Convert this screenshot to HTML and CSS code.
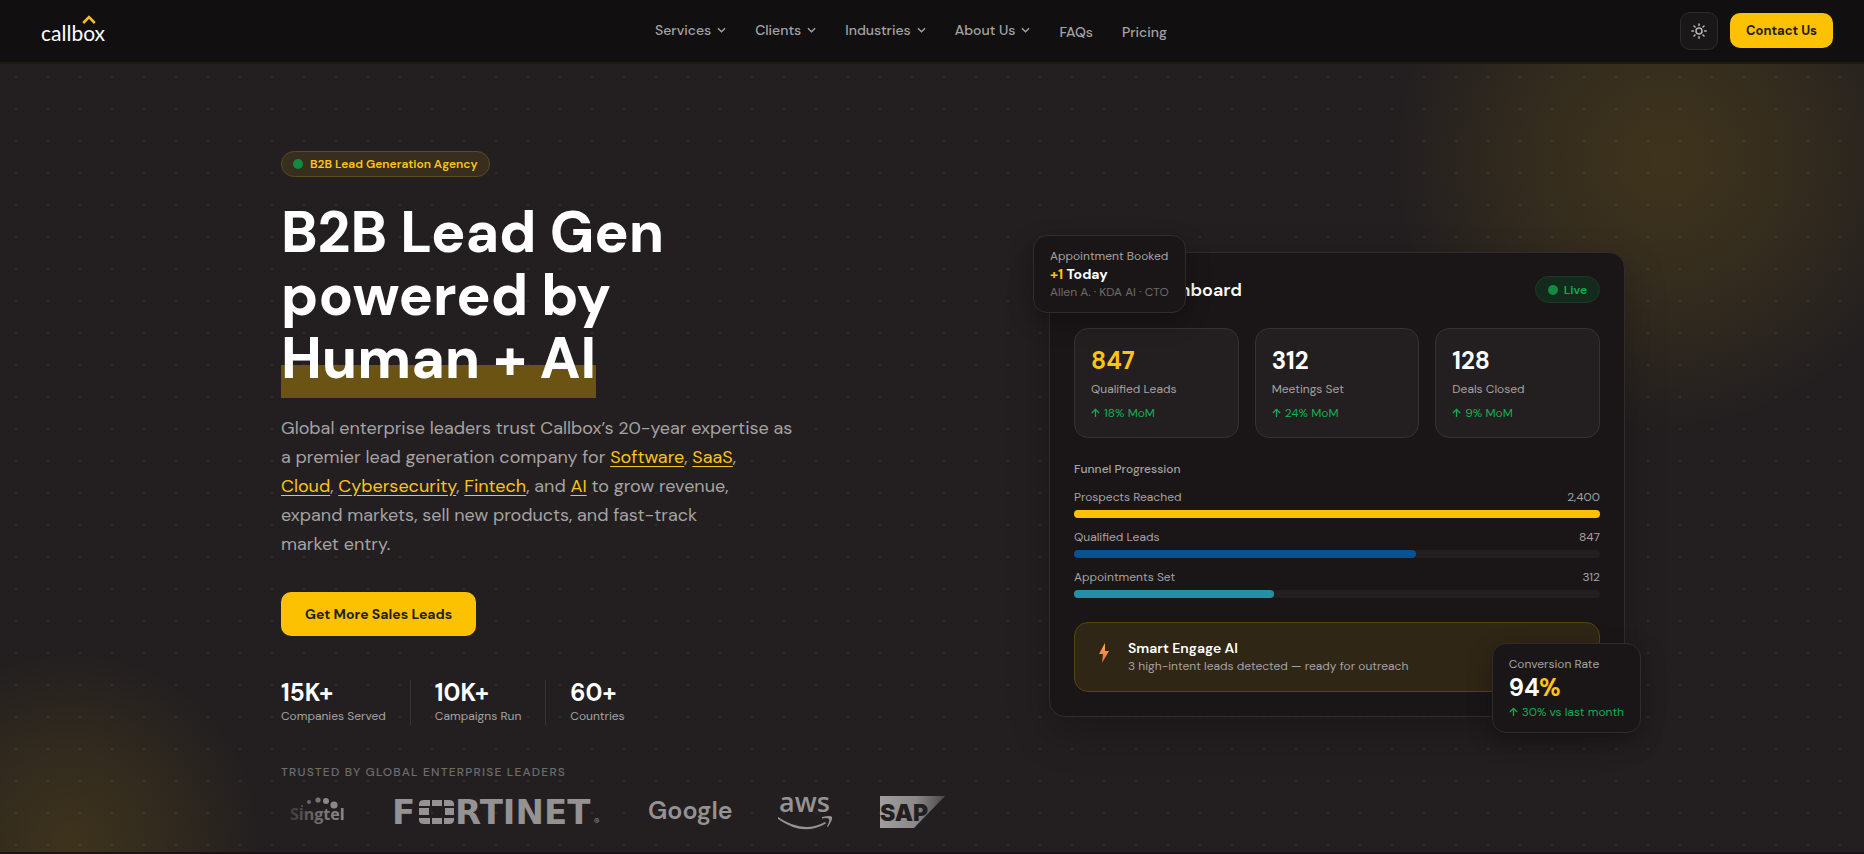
FILE: index.html
```html
<!DOCTYPE html>
<html lang="en">
<head>
<meta charset="utf-8">
<title>Callbox – B2B Lead Generation Agency</title>
<meta name="viewport" content="width=device-width, initial-scale=1">
<link rel="stylesheet" href="styles.css">
</head>
<body>
<header class="nav">
  <a class="brand" href="#" aria-label="callbox home">callbox
    <svg class="brand-roof" viewBox="0 0 14 9" width="14" height="9" aria-hidden="true"><path d="M1.200 8 7 2.200 12.800 8" fill="none" stroke="#f5bd1f" stroke-width="2.600"/></svg>
  </a>
  <nav class="menu" aria-label="Main">
    <button class="menu-item has-sub" type="button">Services <svg class="chev" viewBox="0 0 10 6"><path d="m1 1 4 4 4-4"/></svg></button>
    <button class="menu-item has-sub" type="button">Clients <svg class="chev" viewBox="0 0 10 6"><path d="m1 1 4 4 4-4"/></svg></button>
    <button class="menu-item has-sub" type="button">Industries <svg class="chev" viewBox="0 0 10 6"><path d="m1 1 4 4 4-4"/></svg></button>
    <button class="menu-item has-sub" type="button">About Us <svg class="chev" viewBox="0 0 10 6"><path d="m1 1 4 4 4-4"/></svg></button>
    <a class="menu-item" href="#">FAQs</a>
    <a class="menu-item" href="#">Pricing</a>
  </nav>
  <div class="nav-actions">
    <button class="theme" type="button" aria-label="Toggle theme">
      <svg viewBox="0 0 24 24" width="18" height="18"><circle cx="12" cy="12" r="4"/><path d="M12 2.500v2M12 19.500v2M2.500 12h2M19.500 12h2M5.300 5.300l1.400 1.400M17.300 17.300l1.400 1.400M5.300 18.700l1.400-1.400M17.300 6.700l1.400-1.400"/></svg>
    </button>
    <a class="btn btn-small" href="#">Contact Us</a>
  </div>
</header>

<main class="hero">
  <div class="hero-inner">
    <section class="pitch">
      <p class="badge"><span class="dot"></span>B2B Lead Generation Agency</p>
      <h1 class="title">B2B Lead Gen<br>powered by<br><span class="mark">Human + AI</span></h1>
      <p class="lead">Global enterprise leaders trust Callbox’s 20-year expertise as<br>a premier lead generation company for <a href="#">Software</a>, <a href="#">SaaS</a>,<br><a href="#">Cloud</a>, <a href="#">Cybersecurity</a>, <a href="#">Fintech</a>, and <a href="#">AI</a> to grow revenue,<br>expand markets, sell new products, and fast-track<br>market entry.</p>
      <a class="btn btn-large" href="#">Get More Sales Leads</a>
      <ul class="stats">
        <li><strong>15K+</strong><span>Companies Served</span></li>
        <li><strong>10K+</strong><span>Campaigns Run</span></li>
        <li><strong>60+</strong><span>Countries</span></li>
      </ul>
      <p class="trusted">TRUSTED BY GLOBAL ENTERPRISE LEADERS</p>
      <div class="logos">
        <svg class="logo" width="56" height="34" viewBox="0 0 56 34" role="img" aria-label="Singtel">
          <defs><linearGradient id="fadeSing" x1="0" x2="1"><stop offset="0" stop-color="#3c393a"/><stop offset=".6" stop-color="#777475"/><stop offset="1" stop-color="#8f8c8d"/></linearGradient></defs>
          <text x="-1" y="25" font-family="Open Sans" font-weight="700" font-size="16" fill="url(#fadeSing)">Singtel</text>
          <g fill="#8b8889"><circle cx="11" cy="11" r="1" fill="#5a5758"/><circle cx="18" cy="7" r="2" fill="#6a6768"/><circle cx="27" cy="5" r="2.600" fill="#777475"/><circle cx="35" cy="6" r="3"/><circle cx="43" cy="10" r="3.600"/></g>
        </svg>
        <svg class="logo" width="210" height="34" viewBox="0 0 210 34" role="img" aria-label="Fortinet">
          <g fill="#959293">
            <text x="-1" y="29" font-family="DejaVu Sans" font-weight="700" font-size="34">F</text>
            <path d="M37 5v6H26V9q0-4 5-4zM39 5h10v6H39zM51 5h5q5 0 5 4v2H51zM26 13h10v7H26zM52 13h9v7h-9zM26 23h11v6h-6q-5 0-5-4zM39 23h10v6H39zM51 23h10v2q0 4-5 4h-5z"/>
            <text x="62" y="29" font-family="DejaVu Sans" font-weight="700" font-size="34">RTINET</text>
            <text x="201" y="29" font-family="Inter" font-size="8">®</text>
          </g>
        </svg>
        <svg class="logo" width="84" height="34" viewBox="0 0 84 34" role="img" aria-label="Google">
          <text x="-1" y="24" font-family="DM Sans" font-weight="600" font-size="25" fill="#959293">Google</text>
        </svg>
        <svg class="logo" width="56" height="34" viewBox="0 0 56 34" role="img" aria-label="aws">
          <text x="0" y="17" font-family="Open Sans" font-weight="600" font-size="27" fill="#959293">aws</text>
          <path d="M-1 22q25 17 47 5l1 1.500Q24 42-1 24zM43 22q9-2 10 0t-4 10l-1-.5q3-6 2-7.500t-7-.5z" fill="#959293"/>
        </svg>
        <svg class="logo" width="66" height="34" viewBox="0 0 66 34" role="img" aria-label="SAP">
          <defs><linearGradient id="fadeSap" x1="0" x2="1"><stop offset="0" stop-color="#a09d9e"/><stop offset=".55" stop-color="#8b8889"/><stop offset="1" stop-color="#4b4849"/></linearGradient></defs>
          <path d="M-1 1h65L33 33H-1z" fill="url(#fadeSap)"/>
          <text x="-1" y="26" font-family="Inter" font-weight="900" font-size="23" fill="#231f20">SAP</text>
        </svg>
      </div>
    </section>

    <section class="showcase" aria-label="Pipeline overview">
      <div class="panel">
        <div class="panel-head">
          <h2>Pipeline Dashboard</h2>
          <span class="live"><span class="dot"></span>Live</span>
        </div>
        <div class="cards">
          <div class="card"><strong class="gold">847</strong><span>Qualified Leads</span><em><svg class="up" viewBox="0 0 10 10"><path d="M5 9.500V1M1 5l4-4 4 4"/></svg>18% MoM</em></div>
          <div class="card"><strong>312</strong><span>Meetings Set</span><em><svg class="up" viewBox="0 0 10 10"><path d="M5 9.500V1M1 5l4-4 4 4"/></svg>24% MoM</em></div>
          <div class="card"><strong>128</strong><span>Deals Closed</span><em><svg class="up" viewBox="0 0 10 10"><path d="M5 9.500V1M1 5l4-4 4 4"/></svg>9% MoM</em></div>
        </div>
        <h3 class="funnel-title">Funnel Progression</h3>
        <div class="step"><div class="step-text"><span>Prospects Reached</span><span>2,400</span></div><div class="track"><div class="fill gold-fill" style="width:100%"></div></div></div>
        <div class="step"><div class="step-text"><span>Qualified Leads</span><span>847</span></div><div class="track"><div class="fill blue-fill" style="width:65%"></div></div></div>
        <div class="step"><div class="step-text"><span>Appointments Set</span><span>312</span></div><div class="track"><div class="fill teal-fill" style="width:38%"></div></div></div>
        <div class="engage">
          <svg width="12" height="20" viewBox="0 0 12 20" aria-hidden="true"><defs><linearGradient id="bolt" x1="0" y1="0" x2="0" y2="1"><stop offset="0" stop-color="#f9b43c"/><stop offset="1" stop-color="#f0605a"/></linearGradient></defs><path d="M7 0 1 11h4L4 20l7-12H7z" fill="url(#bolt)"/></svg>
          <div><strong>Smart Engage AI</strong><span>3 high-intent leads detected — ready for outreach</span></div>
        </div>
      </div>
      <div class="float float-top"><span>Appointment Booked</span><strong><b class="gold">+1</b> Today</strong><small>Allen A. · KDA AI · CTO</small></div>
      <div class="float float-bottom"><span>Conversion Rate</span><strong class="big">94<b class="gold">%</b></strong><em><svg class="up" viewBox="0 0 10 10"><path d="M5 9.500V1M1 5l4-4 4 4"/></svg>30% vs last month</em></div>
    </section>
  </div>
</main>
</body>
</html>
```
FILE: styles.css
```css
* { box-sizing: border-box; }
body { margin: 0; background: #231f20; color: #fff; font-family: "DM Sans", Inter, sans-serif; min-height: 100vh; display: flex; flex-direction: column; overflow-x: hidden; }
p, h1, h2, h3, ul { margin: 0; padding: 0; }
a { color: inherit; text-decoration: none; }
button { font: inherit; color: inherit; background: none; border: 0; padding: 0; }
em { font-style: normal; }
b { font-weight: inherit; }
.gold { color: #fcc419; }

.nav { height: 64px; background: #110f10; border-bottom: 2px solid #1e1a10; display: grid; grid-template-columns: 1fr auto 1fr; align-items: center; padding: 0 31px 1px 41px; position: relative; z-index: 2; }
.brand { position: relative; justify-self: start; font-family: Lato, sans-serif; font-weight: 400; font-size: 21px; line-height: 24px; padding-top: 4px; }
.brand-roof { position: absolute; right: 9px; top: -2px; }
.menu { display: flex; gap: 29px; font-size: 14px; font-weight: 500; color: #a5a3a3; line-height: 20px; padding: 2px 52px 0 0; }
.menu-item { display: flex; align-items: center; gap: 6px; }
.has-sub { padding-bottom: 4px; }
.chev { width: 9px; height: 6px; fill: none; stroke: currentColor; stroke-width: 1.5; }
.nav-actions { justify-self: end; display: flex; align-items: center; gap: 12px; }
.theme { width: 38px; height: 38px; border: 1px solid #2e2b2c; border-radius: 10px; background: #1a1718; display: grid; place-items: center; }
.theme svg { fill: none; stroke: #b9b6b7; stroke-width: 2; stroke-linecap: round; }
.btn { background: #fcc100; color: #231f20; font-weight: 700; border-radius: 10px; display: inline-flex; align-items: center; justify-content: center; }
.btn-small { font-size: 13px; height: 35px; padding: 0 16px; }
.btn-large { font-size: 14px; height: 44px; padding: 0 24px; }

.hero { flex: 1; position: relative; background:
  radial-gradient(circle, rgba(255,255,255,.06) 1px, transparent 1px) 0 -3px / 32px 32px,
  radial-gradient(circle at calc(100% - 200px) 95px, rgba(250,193,0,.13), rgba(250,193,0,.08) 130px, transparent 270px),
  radial-gradient(circle at 70px calc(100% - 10px), rgba(250,193,0,.12), rgba(250,193,0,.07) 90px, transparent 190px),
  #231f20; border-bottom: 2px solid #1c1218; }
.hero-inner { margin-left: calc(50% - 651px); max-width: 1344px; padding-top: 87px; display: grid; grid-template-columns: minmax(0, 1fr) 576px; align-items: start; }
.dot { width: 10px; height: 10px; border-radius: 50%; background: #138a3f; }
.badge { display: inline-flex; align-items: center; gap: 7px; height: 26px; padding: 0 11px; border: 1px solid #5b4a1b; border-radius: 13px; background: #382e1e; color: #fcc419; font-size: 12px; font-weight: 600; }
.title { margin-top: 24px; font-size: 57px; line-height: 63px; font-weight: 800; }
.mark { background: linear-gradient(#6b5314, #6b5314) 0 100% / 100% 33px no-repeat; padding-bottom: 2px; }
.lead { margin-top: 24px; font-size: 18px; line-height: 29px; color: #a5a3a3; white-space: nowrap; }
.lead a { color: #fcc419; text-decoration: underline; text-underline-offset: 3px; }
.btn-large { margin-top: 33px; }
.stats { list-style: none; display: flex; margin-top: 44px; }
.stats li { display: grid; padding-right: 24px; margin-right: 24px; border-right: 1px solid #373334; }
.stats li:last-child { border: 0; }
.stats strong { font-size: 24px; line-height: 26px; font-weight: 700; }
.stats span { font-size: 12px; line-height: 18px; margin-top: 1px; color: #a5a3a3; }
.trusted { margin-top: 39px; font-size: 12px; line-height: 16px; font-weight: 500; letter-spacing: 1.2px; color: #6f6c6d; }
.logos { display: flex; align-items: center; gap: 46px; margin-top: 15px; padding-left: 10px; }
.logo { display: block; flex: none; overflow: visible; }

.showcase { position: relative; margin-top: 101px; }
.panel { background: #1a1617; border: 1px solid #302c2d; border-radius: 16px; padding: 23px 24px 24px; box-shadow: 0 16px 40px rgba(0,0,0,.25); }
.panel-head { display: flex; justify-content: space-between; align-items: center; height: 27px; }
.panel-head h2 { font-size: 18px; font-weight: 600; }
.live { display: inline-flex; align-items: center; gap: 6px; height: 27px; padding: 0 12px; border: 1px solid #1b3a26; border-radius: 14px; background: #142a1c; color: #10b050; font-size: 12px; font-weight: 600; }
.cards { display: grid; grid-template-columns: repeat(3, 1fr); gap: 16px; margin-top: 25px; }
.card { height: 110px; padding: 19px 16px; border: 1px solid #363233; border-radius: 14px; background: #231f20; display: flex; flex-direction: column; }
.card strong { font-size: 24px; line-height: 26px; font-weight: 700; }
.card span { margin-top: 6px; font-size: 12px; line-height: 18px; color: #a5a3a3; }
.card em, .float em { display: flex; align-items: center; gap: 4px; color: #10b050; font-size: 12px; line-height: 18px; }
.card em { margin-top: 6px; }
.up { width: 9px; height: 10px; fill: none; stroke: currentColor; stroke-width: 1.4; }
.funnel-title { margin-top: 22px; font-size: 12px; line-height: 18px; font-weight: 500; color: #a5a3a3; }
.step { margin-top: 10px; }
.step-text { display: flex; justify-content: space-between; font-size: 12px; line-height: 18px; color: #a5a3a3; }
.track { height: 8px; margin-top: 4px; border-radius: 4px; background: #231f20; }
.fill { height: 8px; border-radius: 4px; }
.gold-fill { background: #fcc100; }
.blue-fill { background: #045291; }
.teal-fill { background: #2291a6; }
.engage { margin-top: 24px; height: 70px; border: 1px solid #55450f; border-radius: 14px; background: #302616; display: flex; align-items: center; gap: 18px; padding-left: 23px; }
.engage svg { margin-bottom: 8px; }
.engage div { display: grid; }
.engage strong { font-size: 14px; line-height: 18px; font-weight: 600; }
.engage span { font-size: 12px; line-height: 18px; color: #a5a3a3; }
.float { position: absolute; display: grid; padding: 11px 16px; border: 1px solid #302c2d; border-radius: 14px; background: #1a1617; box-shadow: 0 8px 24px rgba(0,0,0,.3); font-size: 12px; line-height: 18px; color: #a5a3a3; white-space: nowrap; }
.float strong { color: #fff; font-size: 14px; font-weight: 700; }
.float small { font-size: 12px; color: #6f6c6d; }
.float-top { left: -16px; top: -17px; }
.float-bottom { right: -16px; bottom: -16px; }
.float .big { font-size: 24px; line-height: 30px; font-weight: 700; }
```
